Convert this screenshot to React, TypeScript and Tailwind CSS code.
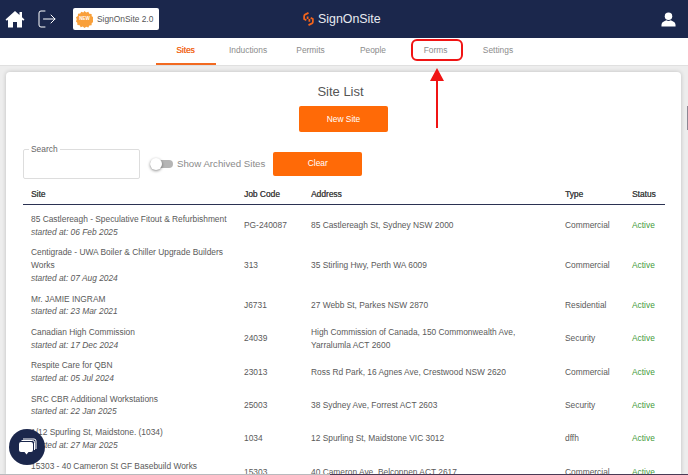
const tabs = ["Sites", "Inductions", "Permits", "People", "Forms", "Settings"];

const rows = [
  { site: ["85 Castlereagh - Speculative Fitout & Refurbishment"], started: "06 Feb 2025", code: "PG-240087", address: ["85 Castlereagh St, Sydney NSW 2000"], type: "Commercial" },
  { site: ["Centigrade - UWA Boiler & Chiller Upgrade Builders", "Works"], started: "07 Aug 2024", code: "313", address: ["35 Stirling Hwy, Perth WA 6009"], type: "Commercial" },
  { site: ["Mr. JAMIE INGRAM"], started: "23 Mar 2021", code: "J6731", address: ["27 Webb St, Parkes NSW 2870"], type: "Residential" },
  { site: ["Canadian High Commission"], started: "17 Dec 2024", code: "24039", address: ["High Commission of Canada, 150 Commonwealth Ave,", "Yarralumla ACT 2600"], type: "Security" },
  { site: ["Respite Care for QBN"], started: "05 Jul 2024", code: "23013", address: ["Ross Rd Park, 16 Agnes Ave, Crestwood NSW 2620"], type: "Commercial" },
  { site: ["SRC CBR Additional Workstations"], started: "22 Jan 2025", code: "25003", address: ["38 Sydney Ave, Forrest ACT 2603"], type: "Security" },
  { site: ["1/12 Spurling St, Maidstone. (1034)"], started: "27 Mar 2025", code: "1034", address: ["12 Spurling St, Maidstone VIC 3012"], type: "dffh" },
  { site: ["15303 - 40 Cameron St GF Basebuild Works"], started: "11 Mar 2025", code: "15303", address: ["40 Cameron Ave, Belconnen ACT 2617"], type: "Commercial" },
];

function Row({ r }: { r: (typeof rows)[number] }) {
  return (
    <div className="flex items-center whitespace-nowrap py-[4px] text-[8.4px] leading-[12.7px] text-[#5a5a5a]">
      <div className="w-[221px] shrink-0 pl-[8px]">
        {r.site.map((s) => (
          <div key={s}>{s}</div>
        ))}
        <div className="italic">started at: {r.started}</div>
      </div>
      <div className="w-[67px] shrink-0">{r.code}</div>
      <div className="w-[254px] shrink-0">
        {r.address.map((s) => (
          <div key={s}>{s}</div>
        ))}
      </div>
      <div className="w-[67px] shrink-0">{r.type}</div>
      <div className="text-[#3f9a3a]">Active</div>
    </div>
  );
}

export default function App() {
  return (
    <div className="relative h-[475px] w-[688px] overflow-hidden bg-[#ededed] font-['Liberation_Sans',Arial,sans-serif]">
      <header className="relative flex h-[38px] items-center justify-between bg-[#1b274c] pl-[5px] pr-[12px]">
        <div className="flex items-center">
          <svg width="20" height="18" viewBox="0 0 20 18" fill="#fff" className="mr-[13px]">
            <path d="M10 1 L0.5 9.5 L1.8 10.8 L3 9.8 V17.5 H8 V12 H12 V17.5 H17 V9.8 L18.2 10.8 L19.5 9.5 L17 7.2 V2 H14.5 V4.9 Z" />
          </svg>
          <svg width="18" height="18" viewBox="0 0 18 18" fill="none" stroke="#fff" strokeWidth="1" strokeLinecap="round" strokeLinejoin="round" className="mr-[17px]">
            <path d="M7 1 H3 Q1 1 1 3 V15 Q1 17 3 17 H7" />
            <path d="M5.5 9 H17 M13 5 L17 9 L13 13" />
          </svg>
          <div className="flex h-[22px] w-[86px] items-center rounded-[2px] bg-white pl-[3px] text-[8.4px] text-[#555]">
            <div className="relative mr-[4px] flex h-[17px] w-[17px] items-center justify-center">
              <svg width="17" height="17" viewBox="0 0 24 24" className="absolute inset-0">
                <path fill="#f9a03a" d="M12 0l2.4 2.1 3-1 1.4 2.8 3.2.3.2 3.2 2.6 1.8-1 3 1 3-2.6 1.8-.2 3.2-3.2.3-1.4 2.8-3-1L12 24l-2.4-2.1-3 1-1.4-2.8-3.2-.3-.2-3.2L0 14.8l1-3-1-3 2.6-1.8.2-3.2 3.2-.3L7.4 1l3 1z" />
              </svg>
              <span className="relative text-[4.5px] font-bold text-white">NEW</span>
            </div>
            <span>SignOnSite 2.0</span>
          </div>
        </div>
        <div className="absolute left-[303px] top-[12px] flex items-center">
          <svg width="11" height="14" viewBox="0 0 12 16" fill="none" stroke="#f2641c" strokeWidth="2" className="mr-[4px]">
            <path d="M6 1 L2 3 Q1 3.5 1 5 V8 L3.5 9.5" />
            <path d="M6 15 L10 13 Q11 12.5 11 11 V8 L8.5 6.5" />
            <path d="M5 5 V8 M7 8 V11" />
          </svg>
          <span className="text-[12.4px] leading-[14px] text-[#e8eaf0]">SignOnSite</span>
        </div>
        <svg width="15" height="15" viewBox="0 0 16 16" fill="#fff">
          <circle cx="8" cy="4.4" r="4" />
          <path d="M0.5 15.5 V13.5 Q0.5 11 3 10 L5.6 8.8 Q8 10.5 10.4 8.8 L13 10 Q15.5 11 15.5 13.5 V15.5 Z" />
        </svg>
      </header>

      <nav className="flex h-[28px] justify-center gap-[2.5px] border-b border-[#e0e0e0] bg-white pr-[4.5px]">
        {tabs.map((t, i) => (
          <div
            key={t}
            className={`relative flex w-[60px] items-center justify-center text-[8.4px] ${
              i === 0 ? "border-b-2 border-[#f26a21] pb-[1px] text-[#f26a21] [text-shadow:0.2px_0_0_#f26a21]" : "pb-[3px] text-[#8c8c8c]"
            }`}
          >
            {t}
            {t === "Forms" && (
              <div className="absolute left-[5px] top-[1px] h-[22px] w-[52px] rounded-[6px] border-2 border-[#f01414]" />
            )}
          </div>
        ))}
      </nav>

      <main className="ml-[6px] mt-[6px] h-[403px] w-[675px] rounded-t-[4px] bg-white pl-[17px] pr-[16px] pt-[12px] shadow-[0_0_4px_rgba(0,0,0,0.2)]">
        <h1 className="pr-[7px] text-center text-[13px] leading-[16px] text-[#555]">Site List</h1>
        <div className="mt-[6px] flex justify-center pr-[1px]">
          <button className="h-[26px] w-[89px] rounded-[2px] bg-[#ff6a07] text-[8.4px] text-white">New Site</button>
        </div>
        <div className="mt-[17px] flex h-[30px] items-center">
          <fieldset className="mt-[-3px] h-[33px] w-[117px] rounded-[2px] border border-[#ddd]">
            <legend className="ml-[5px] px-[2px] text-[8.4px] leading-[6px] text-[#666]">Search</legend>
          </fieldset>
          <div className="relative ml-[10px] h-[8px] w-[23px] rounded-full bg-[#b5b5b5]">
            <div className="absolute left-0 top-[-2px] h-[12px] w-[12px] rounded-full bg-white shadow-[0_1px_3px_rgba(0,0,0,0.45)]" />
          </div>
          <span className="ml-[4px] text-[9.7px] text-[#8a8a8a]">Show Archived Sites</span>
          <button className="ml-[8px] h-[24px] w-[89px] rounded-[2px] bg-[#ff6a07] pb-[2px] text-[8.4px] text-white">Clear</button>
        </div>
        <div className="mt-[7px] flex h-[19px] items-start border-b border-[#2b3252] pt-[2px] text-[8.4px] leading-[13px] text-[#444] [text-shadow:0.2px_0_0_#444]">
          <div className="w-[221px] shrink-0 pl-[8px]">Site</div>
          <div className="w-[67px] shrink-0">Job Code</div>
          <div className="w-[254px] shrink-0">Address</div>
          <div className="w-[67px] shrink-0">Type</div>
          <div>Status</div>
        </div>
        <div className="pt-[4px]">
          {rows.map((r) => (
            <Row key={r.code} r={r} />
          ))}
        </div>
      </main>

      <div className="absolute left-[9px] top-[429px] flex h-[36px] w-[36px] items-center justify-center rounded-full bg-[#1b274c]">
        <svg width="22" height="20" viewBox="0 0 22 20">
          <path d="M7 2 H18 Q20 2 20 4 V12" stroke="#fff" fill="none" strokeWidth="1" />
          <path d="M5.5 3.5 H16.5 Q18.5 3.5 18.5 5.5 V13" stroke="#fff" fill="none" strokeWidth="1" />
          <path fill="#fff" d="M5 5 H15 Q17 5 17 7 V13 Q17 15 15 15 H12.5 L10.5 17.5 L8.5 15 H5 Q3 15 3 13 V7 Q3 5 5 5 Z" />
        </svg>
      </div>

      <svg width="14" height="60" viewBox="0 0 14 60" className="absolute left-[430px] top-[68px]">
        <path d="M7 0 L14 13 H8 V60 H6 V13 H0 Z" fill="#f01414" />
      </svg>
      <div className="absolute left-[687px] top-[106px] h-[24px] w-[1px] bg-[#8d8794]" />
      <div className="absolute bottom-0 left-0 flex h-[1px] w-full">
        <div className="w-[330px] bg-[#b9b9bd]" />
        <div className="flex-1 bg-[#4a3a55]" />
      </div>
    </div>
  );
}
